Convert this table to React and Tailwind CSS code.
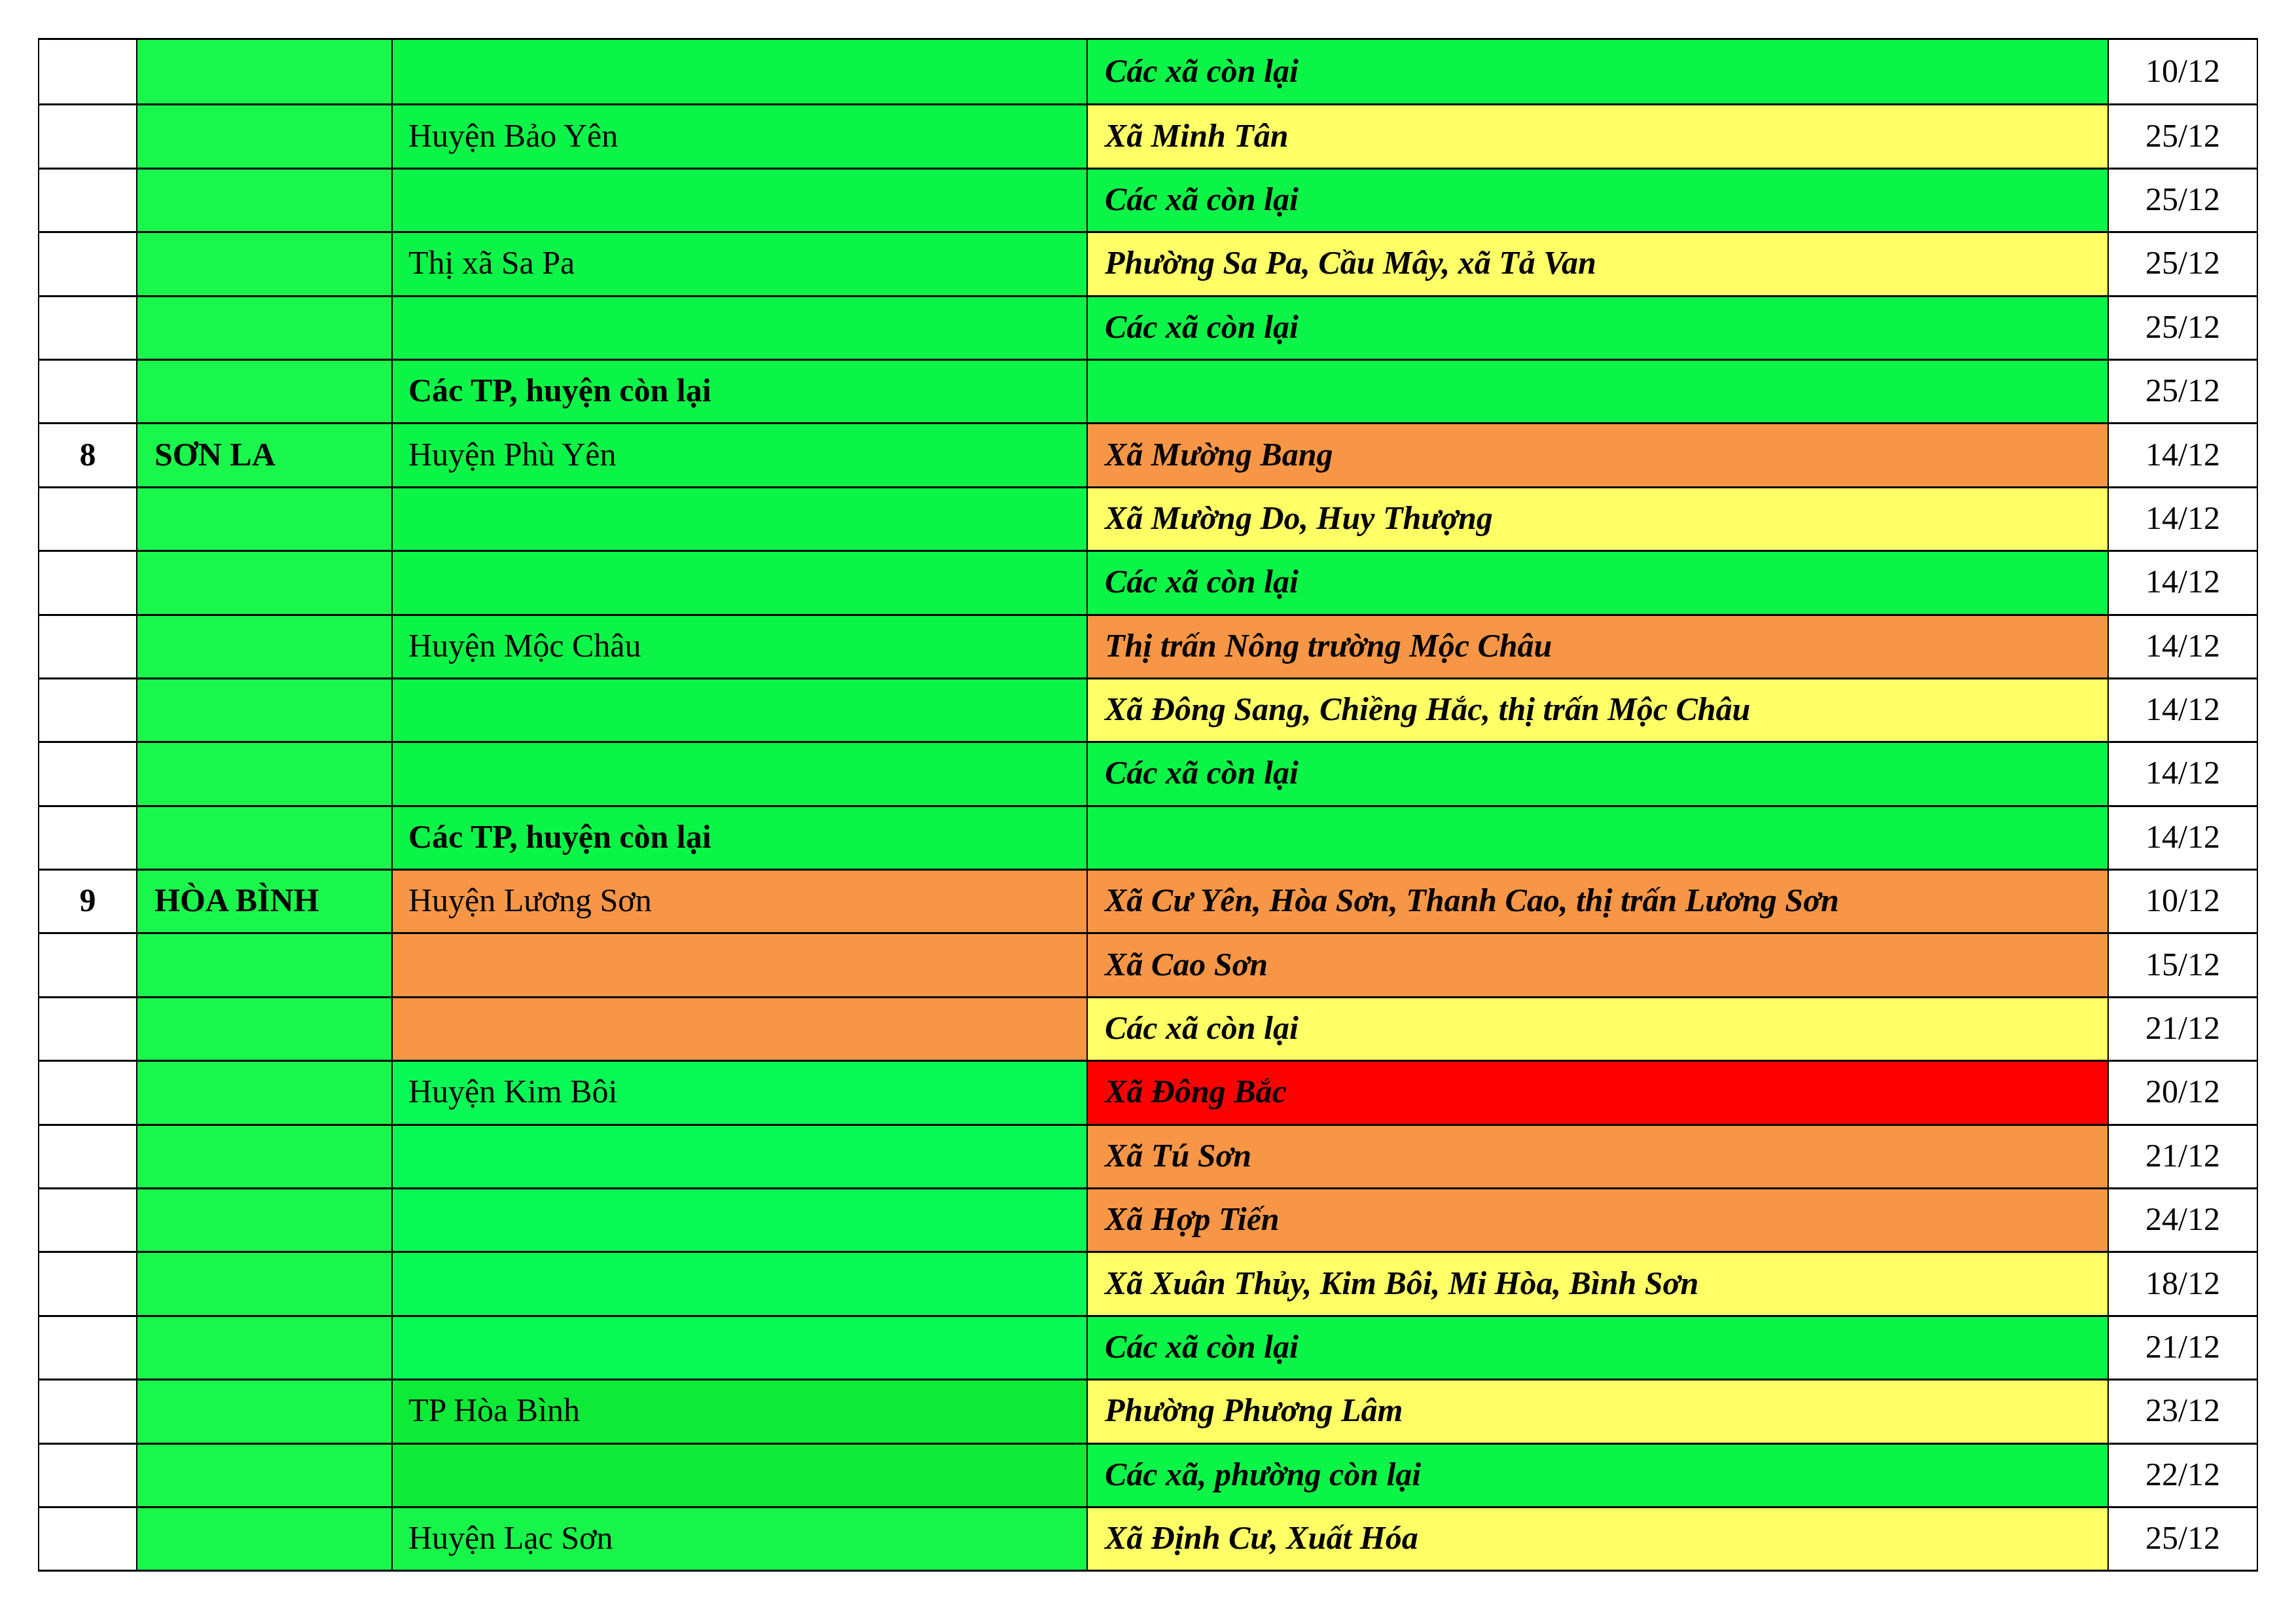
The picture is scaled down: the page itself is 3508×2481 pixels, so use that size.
import React from "react";

const G2 = "bg-[#1af74c]";
const GREEN = "bg-[#0af547]";
const YELLOW = "bg-[#ffff66]";
const ORANGE = "bg-[#f79646]";
const RED = "bg-[#ff0000]";

// [stt, tỉnh, huyện, huyện bold?, màu huyện, xã, màu xã, ngày]
const rows = [
    ["", "", "", false, GREEN, "Các xã còn lại", GREEN, "10/12"],
    ["", "", "Huyện Bảo Yên", false, GREEN, "Xã Minh Tân", YELLOW, "25/12"],
    ["", "", "", false, GREEN, "Các xã còn lại", GREEN, "25/12"],
    ["", "", "Thị xã Sa Pa", false, GREEN, "Phường Sa Pa, Cầu Mây, xã Tả Van", YELLOW, "25/12"],
    ["", "", "", false, GREEN, "Các xã còn lại", GREEN, "25/12"],
    ["", "", "Các TP, huyện còn lại", true, GREEN, "", GREEN, "25/12"],
    ["8", "SƠN LA", "Huyện Phù Yên", false, GREEN, "Xã Mường Bang", ORANGE, "14/12"],
    ["", "", "", false, GREEN, "Xã Mường Do, Huy Thượng", YELLOW, "14/12"],
    ["", "", "", false, GREEN, "Các xã còn lại", GREEN, "14/12"],
    ["", "", "Huyện Mộc Châu", false, GREEN, "Thị trấn Nông trường Mộc Châu", ORANGE, "14/12"],
    ["", "", "", false, GREEN, "Xã Đông Sang, Chiềng Hắc, thị trấn Mộc Châu", YELLOW, "14/12"],
    ["", "", "", false, GREEN, "Các xã còn lại", GREEN, "14/12"],
    ["", "", "Các TP, huyện còn lại", true, GREEN, "", GREEN, "14/12"],
    ["9", "HÒA BÌNH", "Huyện Lương Sơn", false, ORANGE, "Xã Cư Yên, Hòa Sơn, Thanh Cao, thị trấn Lương Sơn", ORANGE, "10/12"],
    ["", "", "", false, ORANGE, "Xã Cao Sơn", ORANGE, "15/12"],
    ["", "", "", false, ORANGE, "Các xã còn lại", YELLOW, "21/12"],
    ["", "", "Huyện Kim Bôi", false, "bg-[#07f955]", "Xã Đông Bắc", RED, "20/12"],
    ["", "", "", false, "bg-[#07f955]", "Xã Tú Sơn", ORANGE, "21/12"],
    ["", "", "", false, "bg-[#07f955]", "Xã Hợp Tiến", ORANGE, "24/12"],
    ["", "", "", false, "bg-[#07f955]", "Xã Xuân Thủy, Kim Bôi, Mi Hòa, Bình Sơn", YELLOW, "18/12"],
    ["", "", "", false, "bg-[#07f955]", "Các xã còn lại", GREEN, "21/12"],
    ["", "", "TP Hòa Bình", false, "bg-[#0deb38]", "Phường Phương Lâm", YELLOW, "23/12"],
    ["", "", "", false, "bg-[#0deb38]", "Các xã, phường còn lại", GREEN, "22/12"],
    ["", "", "Huyện Lạc Sơn", false, "bg-[#17f54a]", "Xã Định Cư, Xuất Hóa", YELLOW, "25/12"],
];

export default function App() {
    return (
        <div className="bg-white min-h-screen w-[3508px] h-[2481px] pt-[58px] font-['Liberation_Serif','Times_New_Roman',serif] text-[50px] text-black leading-none">
            <div className="ml-[58px] w-[3392px] border-x-2 border-y-[3px] border-black">
                {rows.map((r, i) => (
                    <div
                        key={i}
                        className={`grid grid-cols-[150px_390px_1062px_1560px_1fr] h-[97.4px] ${i > 0 ? "border-t-[3px] border-black" : ""}`}
                    >
                        <div className="bg-white border-r-2 border-black flex items-center justify-center pb-[4px] font-bold">
                            {r[0]}
                        </div>
                        <div className={`${G2} border-r-2 border-black flex items-center pl-[26px] pb-[4px] font-bold`}>
                            {r[1]}
                        </div>
                        <div className={`${r[4]} border-r-2 border-black flex items-center pl-[24px] pb-[4px] ${r[3] ? "font-bold" : ""}`}>
                            {r[2]}
                        </div>
                        <div className={`${r[6]} border-r-2 border-black flex items-center pl-[26px] pb-[4px] font-bold italic`}>
                            {r[5]}
                        </div>
                        <div className="bg-white flex items-center justify-center pb-[4px]">
                            {r[7]}
                        </div>
                    </div>
                ))}
            </div>
        </div>
    );
}
